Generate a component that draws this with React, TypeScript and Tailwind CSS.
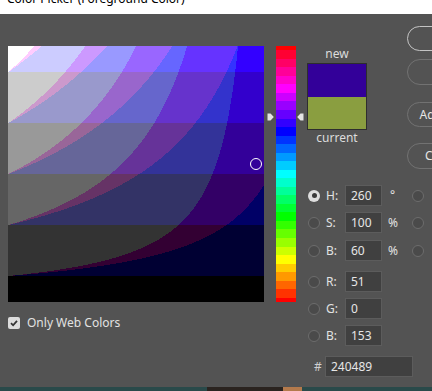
import React, { useMemo } from "react";

const q = (c: number) => Math.min(255, Math.max(0, Math.round(c / 51) * 51));
const toHex = (r: number, g: number, b: number) =>
  "#" + [r, g, b].map((v) => v.toString(16).padStart(2, "0")).join("");

type R = { x: number; y: number; w: number; h: number; c: string };

function buildField(): R[] {
  const f = 0.22;
  const rects: R[] = [];
  for (let y = 0; y < 256; y++) {
    const V = 1 - y / 255;
    let start = 0;
    let prev = "";
    for (let x = 0; x <= 256; x++) {
      let col = "";
      if (x < 256) {
        const S = x / 255;
        col = toHex(q(V * (1 - S * (1 - f)) * 255), q(V * (1 - S) * 255), q(V * 255));
      }
      if (x === 0) {
        prev = col;
        continue;
      }
      if (col !== prev) {
        rects.push({ x: start, y, w: x - start, h: 1, c: prev });
        start = x;
        prev = col;
      }
    }
  }
  return rects;
}

function hueColor(h: number) {
  const hh = (((h % 360) + 360) % 360) / 60;
  const i = Math.floor(hh) % 6;
  const fr = hh - Math.floor(hh);
  const t = fr;
  const qv = 1 - fr;
  const tab = [
    [1, t, 0],
    [qv, 1, 0],
    [0, 1, t],
    [0, qv, 1],
    [t, 0, 1],
    [1, 0, qv],
  ][i];
  return toHex(q(tab[0] * 255), q(tab[1] * 255), q(tab[2] * 255));
}

function buildSlider(): R[] {
  const rects: R[] = [];
  let start = 0;
  let prev = hueColor(360 * (1 - 0.5 / 256));
  for (let y = 1; y <= 256; y++) {
    const col = y < 256 ? hueColor(360 * (1 - (y + 0.5) / 256)) : "";
    if (col !== prev) {
      rects.push({ x: 0, y: start, w: 20, h: y - start, c: prev });
      start = y;
      prev = col;
    }
  }
  return rects;
}

function Radio({ on }: { on?: boolean }) {
  return on ? (
    <div className="w-[12px] h-[12px] rounded-full bg-[#dedede] flex items-center justify-center shrink-0">
      <div className="w-[5px] h-[5px] rounded-full bg-[#3a3a3a]" />
    </div>
  ) : (
    <div className="w-[12px] h-[12px] rounded-full bg-[#4a4a4a] border border-[#6c6c6c] shrink-0" />
  );
}

function Field({ label, value, unit, right, cls }: { label: string; value: string; unit?: string; right?: boolean; cls: string }) {
  return (
    <div className={`flex items-center h-[21px] ${cls}`}>
      <Radio on={label === "H:"} />
      <div className="w-[25px] pl-[6px] text-[12px] text-[#e2e2e2]">{label}</div>
      <div className="w-[37px] h-[21px] bg-[#404040] border border-[#5c5c5c] pl-[5px] flex items-center text-[12px] text-[#e6e6e6]">
        {value}
      </div>
      <div className="w-[30px] pl-[6px] text-[12px] text-[#e2e2e2] h-[21px] flex items-start">
        {unit === "°" ? <span className="mt-[1px] pl-[2px]">°</span> : <span className="mt-[2px]">{unit}</span>}
      </div>
      {right && <Radio />}
    </div>
  );
}

function Marker({ dir }: { dir: "right" | "left" }) {
  return (
    <svg width="7" height="8" viewBox="0 0 7 8" className="block">
      {dir === "right" ? (
        <path d="M0.5 0.5 H3.5 L6.8 4 L3.5 7.5 H0.5 Z" fill="#e4e4e4" />
      ) : (
        <path d="M6.5 0.5 H3.5 L0.2 4 L3.5 7.5 H6.5 Z" fill="#e4e4e4" />
      )}
    </svg>
  );
}

export default function App() {
  const field = useMemo(buildField, []);
  const slider = useMemo(buildSlider, []);
  return (
    <div
      className="w-[432px] h-[391px] overflow-hidden flex flex-col bg-[#535353]"
      style={{ fontFamily: '"Noto Sans", "Open Sans", sans-serif' }}
    >
      {/* title bar */}
      <div className="h-[14px] bg-white overflow-hidden shrink-0">
        <div className="mt-[-9px] ml-[7px] text-[12px] leading-[16px] text-black whitespace-nowrap">
          Color Picker (Foreground Color)
        </div>
      </div>

      {/* body */}
      <div className="flex-1 flex bg-[#535353] min-h-0">
        {/* field column */}
        <div className="pl-[8px] pt-[32px] flex flex-col shrink-0">
          <div className="relative w-[256px] h-[256px]">
            <svg width="256" height="256" viewBox="0 0 256 256" shapeRendering="crispEdges" className="block">
              {field.map((r, i) => (
                <rect key={i} x={r.x} y={r.y} width={r.w} height={r.h} fill={r.c} />
              ))}
            </svg>
            <div className="absolute left-[242px] top-[112px] w-[12px] h-[12px] rounded-full border border-white" />
          </div>
          <div className="flex items-center gap-[7px] mt-[13px] h-[16px]">
            <div className="w-[12px] h-[12px] rounded-[2px] bg-[#dcdcdc] flex items-center justify-center">
              <svg width="10" height="10" viewBox="0 0 10 10">
                <path d="M2 5.2 L4.1 7.3 L8 2.8" fill="none" stroke="#333" strokeWidth="1.8" />
              </svg>
            </div>
            <span className="text-[12px] text-[#e2e2e2]">Only Web Colors</span>
          </div>
        </div>

        {/* hue slider */}
        <div className="ml-[12px] pt-[32px] shrink-0">
          <div className="relative w-[20px] h-[256px]">
            <svg width="20" height="256" viewBox="0 0 20 256" shapeRendering="crispEdges" className="block">
              {slider.map((r, i) => (
                <rect key={i} x={r.x} y={r.y} width={r.w} height={r.h} fill={r.c} />
              ))}
            </svg>
            <div className="absolute left-[-9px] top-[67px]">
              <Marker dir="right" />
            </div>
            <div className="absolute left-[21px] top-[67px]">
              <Marker dir="left" />
            </div>
          </div>
        </div>

        {/* right side */}
        <div className="ml-[11px] pt-[12px] flex flex-col shrink-0">
          <div className="flex">
            <div className="w-[60px] pt-[20px] flex flex-col shrink-0">
              <div className="text-center text-[12px] leading-[16px] text-[#dcdcdc]">new</div>
              <div className="mt-[1px] border border-[#2e2e2e] flex flex-col">
                <div className="h-[33px] bg-[#330099]" />
                <div className="h-[32px] bg-[#8a9e40]" />
              </div>
              <div className="text-center text-[12px] leading-[16px] text-[#dcdcdc]">current</div>
            </div>
            <div className="ml-[40px] flex flex-col shrink-0">
              <div className="w-[118px] h-[25px] rounded-[13px] border-[1.5px] border-[#c4c4c4] flex items-center justify-center text-[12px] text-[#e6e6e6]">
                OK
              </div>
              <div className="mt-[8px] w-[118px] h-[26px] rounded-[13px] border border-[#727272] flex items-center justify-center text-[12px] text-[#e6e6e6]">
                Cancel
              </div>
              <div className="mt-[17px] w-[118px] h-[25px] rounded-[13px] border border-[#727272] flex items-center justify-center text-[12px] text-[#e6e6e6] whitespace-nowrap">
                Add to Swatches
              </div>
              <div className="mt-[16px] w-[118px] h-[26px] rounded-[13px] border border-[#727272] flex items-center justify-center text-[12px] text-[#e6e6e6] whitespace-nowrap">
                Color Libraries
              </div>
            </div>
          </div>

          <div className="mt-[16px] pl-[1px] flex flex-col">
            <Field cls="" label="H:" value="260" unit="°" right />
            <Field cls="mt-[6px]" label="S:" value="100" unit="%" right />
            <Field cls="mt-[7px]" label="B:" value="60" unit="%" right />
            <Field cls="mt-[10px]" label="R:" value="51" />
            <Field cls="mt-[6px]" label="G:" value="0" />
            <Field cls="mt-[6px]" label="B:" value="153" />
            <div className="mt-[10px] flex items-center h-[21px] pl-[6px]">
              <div className="w-[11px] text-[12px] text-[#cfcfcf]">#</div>
              <div className="w-[88px] h-[21px] bg-[#404040] border border-[#5c5c5c] pl-[5px] flex items-center text-[12px] text-[#e6e6e6]">
                240489
              </div>
            </div>
          </div>
        </div>
      </div>

      {/* bottom strip */}
      <div className="h-[4px] flex shrink-0">
        <div className="w-[207px] bg-[#2a4a4a]" />
        <div className="w-[76px] bg-[#2b2420]" />
        <div className="w-[19px] bg-[#b47a4c]" />
        <div className="flex-1 bg-[#2a4a4a]" />
      </div>
    </div>
  );
}
